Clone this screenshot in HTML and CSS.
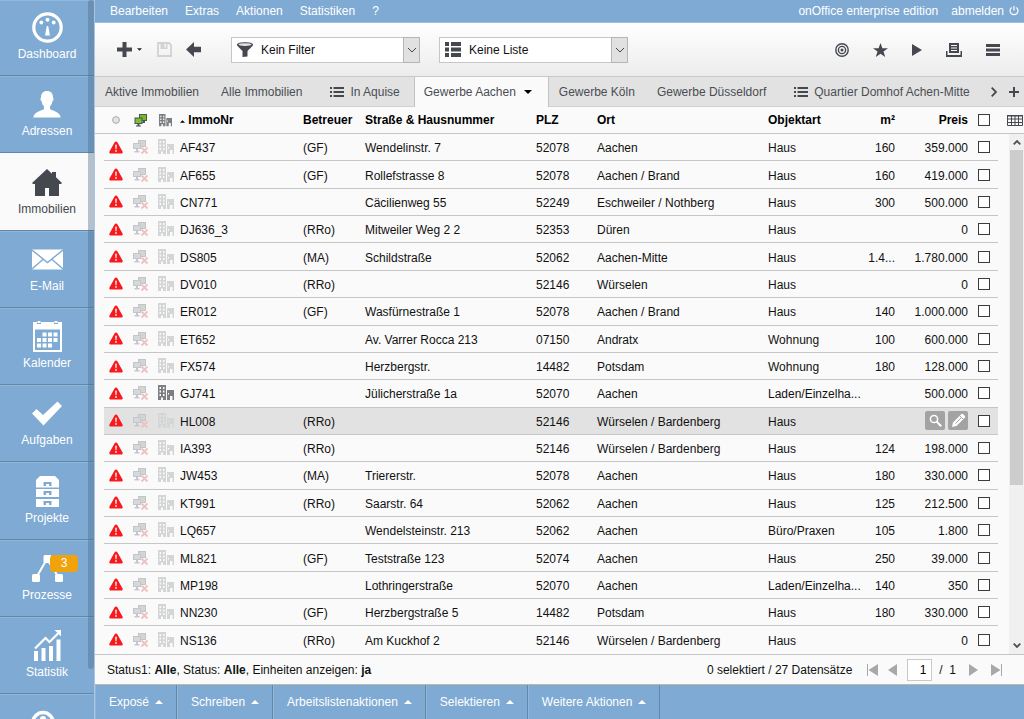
FILE: index.html
```html
<!DOCTYPE html>
<html lang="de">
<head>
<meta charset="utf-8">
<title>onOffice enterprise edition – Immobilien</title>
<meta name="viewport" content="width=device-width, initial-scale=1">
<link rel="stylesheet" href="styles.css">
</head>
<body>
<svg class="sprite" aria-hidden="true">
  <symbol id="warn" viewBox="0 0 14 13"><path d="M7 .4c.7 0 1.100.3 1.500 1l5 9c.6 1.200 0 2.200-1.200 2.200H1.700C.5 12.600-.1 11.600.5 10.400l5-9C5.900.7 6.300.4 7 .4z" fill="#f8191d"/><path d="M6.200 3.800h1.600l-.3 4.400h-1zM6.200 9.200h1.600v1.600H6.200z" fill="#fff"/></symbol>
  <symbol id="web" viewBox="0 0 17 16"><path d="M6 1h8v7H9v2H6z" fill="#c3c5c7"/><path d="M7 2h6v5H7z" fill="#d2d4d6"/><path d="M1 4h8v6H1zM4 10h2v2H4zM2.500 12h5v1.500h-5z" fill="#c3c7cb"/><path d="M2 5h6v4H2z" fill="#d6d9dc"/><path d="M9.500 8.500l6 6m0-6l-6 6" stroke="#efc0c0" stroke-width="1.800"/></symbol>
  <symbol id="webon" viewBox="0 0 14 14"><path d="M5 1h8v7H5zM9 8h2v2H8z" fill="#4a5a50"/><path d="M6 2h6v5H6z" fill="#76b82a"/><path d="M.5 4.500h8V11h-8zM3.500 11h2v1.500H7v1H2v-1h1.500z" fill="#46545c"/><path d="M1.500 5.500h6V10h-6z" fill="#80c02c"/></symbol>
  <symbol id="bld" viewBox="0 0 16 16"><path fill="currentColor" fill-rule="evenodd" d="M0 0h8v15H0zM1.500 2v2H3V2zM5 2v2h1.500V2zM1.500 5.500v2H3v-2zM5 5.500v2h1.500v-2zM1.500 9v2H3V9zM5 9v2h1.500V9zM3 12.500V15h2v-2.500zM9 5h7v10h-1.500v-4H12v4H9zM10 8v1.500h1V8z"/></symbol>
  <symbol id="list" viewBox="0 0 14 12"><path fill="#45484d" d="M0 1h2v2H0zM3.500 1H14v2H3.500zM0 5h2v2H0zM3.500 5H14v2H3.500zM0 9h2v2H0zM3.500 9H14v2H3.500z"/></symbol>
  <symbol id="up" viewBox="0 0 8 4"><path fill="currentColor" d="M0 4l4-4 4 4z"/></symbol>
  <symbol id="down" viewBox="0 0 8 4"><path fill="currentColor" d="M0 0h8L4 4z"/></symbol>
  <symbol id="chev" viewBox="0 0 10 6"><path fill="none" stroke="currentColor" d="M1 1l4 4 4-4"/></symbol>
</svg>
<div class="app">
  <nav class="side" aria-label="Module">
    <a href="#" class="mod"><svg width="31" height="31" viewBox="0 0 31 31"><circle cx="15.500" cy="15.500" r="13.700" fill="none" stroke="#fff" stroke-width="3.200"/><path fill="#fff" d="M14.800 14h1.400l1.800 9.500h-5z"/><g fill="#fff"><circle cx="9.300" cy="10.500" r="1.900"/><circle cx="15.500" cy="7.800" r="2"/><circle cx="21.700" cy="10.500" r="1.900"/></g></svg>Dashboard</a>
    <a href="#" class="mod"><svg width="28" height="27" viewBox="0 0 28 27"><path fill="#fff" d="M14 0c4 0 6 2.500 6 6.500 1 1 .6 3-.5 3.500-.4 2.500-1.200 4-2.500 5.500v2.500c2.500 1.800 10 3 10.800 8.500H.2C1 21 8.500 19.800 11 18v-2.500C9.700 14 8.900 12.500 8.500 10 7.400 9.500 7 7.500 8 6.500 8 2.500 10 0 14 0z"/></svg>Adressen</a>
    <a href="#" class="mod on" aria-current="page"><svg width="30" height="27" viewBox="0 0 30 27"><path fill="#45494f" d="M15 0l5 4.700V3h4v5.300L30 14l-1 1h-2v12H17v-8h-4v8H3V15H1l-1-1z"/></svg>Immobilien</a>
    <a href="#" class="mod"><svg width="31" height="20" viewBox="0 0 31 20"><path fill="#fff" d="M0 0h31v20H0z"/><path fill="none" stroke="#7faad3" stroke-width="1.400" d="M0 .5l15.500 12.500L31 .5M0 19.500l11.500-10M31 19.500l-11.500-10"/></svg>E-Mail</a>
    <a href="#" class="mod"><svg width="29" height="31" viewBox="0 0 29 31"><path fill="#fff" fill-rule="evenodd" d="M0 1h4v2h4V1h13v2h4V1h4v30H0zM2 8.500V29h25V8.500z"/><path fill="#fff" d="M4.500 0h3v2h-3zM21.500 0h3v2h-3zM9.500 11.500h4v4h-4zM15 11.500h4v4h-4zM20.500 11.500h4v4h-4zM4 17h4v4H4zM9.500 17h4v4h-4zM15 17h4v4h-4zM20.500 17h4v4h-4zM4 22.500h4v4H4zM9.500 22.500h4v4h-4zM15 22.500h4v4h-4z"/></svg>Kalender</a>
    <a href="#" class="mod"><svg width="30" height="24" viewBox="0 0 30 24"><path fill="#fff" d="M0 12l4.500-4.500 6.500 6L25.500 0 30 4.500 11.500 24z"/></svg>Aufgaben</a>
    <a href="#" class="mod"><svg width="23" height="31" viewBox="0 0 23 31"><path fill="#fff" fill-rule="evenodd" d="M4 0h15l4 4v7.500H0V4zM7.500 6v4H10V8h3v2h2.500V6zM0 13h23v8H0zM7.500 15v4H10v-2h3v2h2.500v-4zM0 23h23v8H0zM7.500 25v4H10v-2h3v2h2.500v-4z"/></svg>Projekte</a>
    <a href="#" class="mod"><svg width="31" height="27" viewBox="0 0 31 27"><path stroke="#fff" stroke-width="2" fill="none" d="M4 23L15 4l12 19"/><g fill="#fff"><rect x="11.500" width="8" height="8" rx="1.500"/><rect y="19" width="8" height="8" rx="1.500"/><rect x="23" y="19" width="8" height="8" rx="1.500"/></g></svg>Prozesse<span class="badge">3</span></a>
    <a href="#" class="mod"><svg width="28" height="31" viewBox="0 0 28 31"><path fill="#fff" d="M1 21h4v10H1zM8.500 18h4v13h-4zM16 16h4v15h-4zM23.500 9.500h4V31h-4z"/><path fill="none" stroke="#fff" stroke-width="2.200" d="M2 18.500L12.500 8l4 4L26 2.500"/><path fill="#fff" d="M21.500 0H28v6.500z"/></svg>Statistik</a>
    <a href="#" class="mod" aria-label="Hilfe"><svg width="24" height="24" viewBox="0 0 24 24"><circle cx="12" cy="12" r="10" fill="none" stroke="#fff" stroke-width="3.500"/><circle cx="12" cy="8.500" r="3" fill="#fff"/></svg></a>
    <div class="sidethumb"></div>
  </nav>

  <div class="main">
    <header class="menu">
      <a href="#">Bearbeiten</a><a href="#">Extras</a><a href="#">Aktionen</a><a href="#">Statistiken</a><a href="#">?</a>
      <span class="edition">onOffice enterprise edition</span>
      <a href="#" class="logout">abmelden <svg width="10" height="10" viewBox="0 0 10 10"><path fill="none" stroke="#fff" stroke-width="1.200" d="M2.700 1.400a4 4 0 1 0 4.600 0M5 0v4.500"/></svg></a>
    </header>

    <div class="tools">
      <button class="tool add" aria-label="Neu"><svg width="15" height="15" viewBox="0 0 15 15"><path fill="#45494f" d="M5.500 0h4v5.500H15v4H9.500V15h-4V9.500H0v-4h5.500z"/></svg><svg class="mini"><use href="#down"/></svg></button>
      <button class="tool save" aria-label="Speichern" disabled><svg width="15" height="15" viewBox="0 0 15 15"><path fill="none" stroke="#d2d2d2" stroke-width="1.800" d="M1 1h11l2 2v11H1z"/><path fill="#d2d2d2" fill-rule="evenodd" d="M3.500 1h7v6h-7zM7.500 2v3.500H9V2z"/></svg></button>
      <button class="tool back" aria-label="Zurück"><svg width="15" height="15" viewBox="0 0 15 15"><path fill="#45494f" d="M0 7.500L8 0v4.700h7v5.600H8V15z"/></svg></button>
      <div class="pick">
        <svg width="16" height="15" viewBox="0 0 16 15"><path fill="#45494f" d="M0 2.500C0-.6 16-.6 16 2.500c0 1.200-1 2-5.500 6.500v5.500l-5 .5V9C1 4.500 0 3.700 0 2.500z"/><ellipse cx="8" cy="2.600" rx="6.500" ry="1.400" fill="#e4e4e4"/></svg>
        <select aria-label="Filter"><option>Kein Filter</option></select>
        <span class="arrow"><svg width="10" height="6"><use href="#chev"/></svg></span>
      </div>
      <div class="pick">
        <svg width="16" height="15" viewBox="0 0 16 15"><path fill="#45494f" d="M0 0h4v4H0zM6 0h10v4H6zM0 5.500h4v4H0zM6 5.500h10v4H6zM0 11h4v4H0zM6 11h10v4H6z"/></svg>
        <select aria-label="Liste"><option>Keine Liste</option></select>
        <span class="arrow"><svg width="10" height="6"><use href="#chev"/></svg></span>
      </div>
      <div class="right">
        <button class="tool" aria-label="Ziel"><svg width="14" height="14" viewBox="0 0 14 14"><g fill="none" stroke="#45494f" stroke-width="1.400"><circle cx="7" cy="7" r="6.200"/><circle cx="7" cy="7" r="3.600"/></g><circle cx="7" cy="7" r="1.500" fill="#45494f"/></svg></button>
        <button class="tool" aria-label="Favoriten"><svg width="15" height="14" viewBox="0 0 15 14"><path fill="#45494f" d="M7.500 0l1.900 5.200H15l-4.500 3.400 1.700 5.400-4.700-3.300L2.800 14l1.700-5.400L0 5.200h5.600z"/></svg></button>
        <button class="tool" aria-label="Start"><svg width="10" height="12" viewBox="0 0 10 12"><path fill="#45494f" d="M0 0l10 6-10 6z"/></svg></button>
        <button class="tool" aria-label="Drucken"><svg width="16" height="14" viewBox="0 0 16 14"><path fill="#45494f" fill-rule="evenodd" d="M3 0h10v10H3zM5 2v1h6V2zM5 4.500v1h6v-1zM5 7v1h6V7zM0 8h1.500v4h13V8H16v6H0z"/></svg></button>
        <button class="tool" aria-label="Menü"><svg width="14" height="12" viewBox="0 0 14 12"><path fill="#45494f" d="M0 0h14v3H0zM0 4.500h14v3H0zM0 9h14v3H0z"/></svg></button>
      </div>
    </div>

    <div class="tabs">
      <button class="tab">Aktive Immobilien</button>
      <button class="tab">Alle Immobilien</button>
      <button class="tab listed"><svg width="14" height="12"><use href="#list"/></svg>In Aquise</button>
      <button class="tab active">Gewerbe Aachen<svg class="caret" width="8" height="4"><use href="#down"/></svg></button>
      <button class="tab">Gewerbe Köln</button>
      <button class="tab">Gewerbe Düsseldorf</button>
      <button class="tab listed"><svg width="14" height="12"><use href="#list"/></svg>Quartier Domhof Achen-Mitte</button>
      <span class="ends">
        <button class="tool" aria-label="Weiter"><svg width="6" height="10" viewBox="0 0 6 10"><path fill="none" stroke="#45494f" stroke-width="1.800" d="M.7.7L5 5 .7 9.300"/></svg></button>
        <button class="tool" aria-label="Tab hinzufügen"><svg width="10" height="10" viewBox="0 0 10 10"><path stroke="#45494f" stroke-width="2" d="M5 0v10M0 5h10"/></svg></button>
      </span>
    </div>

    <div class="listing">
      <table>
        <colgroup><col class="w-edge"><col class="w-mark"><col class="w-icon"><col class="w-icon"><col class="w-nr"><col class="w-user"><col class="w-street"><col class="w-zip"><col><col class="w-type"><col class="w-size"><col class="w-price"><col class="w-check"><col class="w-grid"></colgroup>
        <thead><tr><th></th><th class="i"><svg width="8" height="8" viewBox="0 0 8 8"><circle cx="4" cy="4" r="3.400" fill="#e4e4e4" stroke="#a8a8a8"/></svg></th><th class="i"><svg width="14" height="14"><use href="#webon"/></svg></th><th class="i dark"><svg width="13" height="13"><use href="#bld"/></svg></th><th class="sort"><svg width="5" height="3"><use href="#up"/></svg> ImmoNr</th><th>Betreuer</th><th>Straße &amp; Hausnummer</th><th>PLZ</th><th>Ort</th><th>Objektart</th><th class="n">m²</th><th class="n">Preis</th><th class="c"><input type="checkbox" aria-label="Alle auswählen"></th><th class="g"><svg width="16" height="11" viewBox="0 0 16 11"><path fill="none" stroke="#45494f" d="M.5.5h15v10H.5zM0 4h16M0 7.500h16M4.500 1v10M8 1v10M11.500 1v10"/><path fill="#45494f" d="M0 0h16v1.500H0z"/></svg></th></tr></thead>
        <tbody>
        <tr><td></td><td class="i"><svg class="w"><use href="#warn"/></svg></td><td class="i"><svg class="m"><use href="#web"/></svg></td><td class="i"><svg class="b"><use href="#bld"/></svg></td><td>AF437</td><td>(GF)</td><td>Wendelinstr. 7</td><td>52078</td><td>Aachen</td><td>Haus</td><td class="n">160</td><td class="n">359.000</td><td class="c"><input type="checkbox" aria-label="AF437"></td><td></td></tr>
        <tr><td></td><td class="i"><svg class="w"><use href="#warn"/></svg></td><td class="i"><svg class="m"><use href="#web"/></svg></td><td class="i"><svg class="b"><use href="#bld"/></svg></td><td>AF655</td><td>(GF)</td><td>Rollefstrasse 8</td><td>52078</td><td>Aachen / Brand</td><td>Haus</td><td class="n">160</td><td class="n">419.000</td><td class="c"><input type="checkbox" aria-label="AF655"></td><td></td></tr>
        <tr><td></td><td class="i"><svg class="w"><use href="#warn"/></svg></td><td class="i"><svg class="m"><use href="#web"/></svg></td><td class="i"><svg class="b"><use href="#bld"/></svg></td><td>CN771</td><td></td><td>Cäcilienweg 55</td><td>52249</td><td>Eschweiler / Nothberg</td><td>Haus</td><td class="n">300</td><td class="n">500.000</td><td class="c"><input type="checkbox" aria-label="CN771"></td><td></td></tr>
        <tr><td></td><td class="i"><svg class="w"><use href="#warn"/></svg></td><td class="i"><svg class="m"><use href="#web"/></svg></td><td class="i"><svg class="b"><use href="#bld"/></svg></td><td>DJ636_3</td><td>(RRo)</td><td>Mitweiler Weg 2 2</td><td>52353</td><td>Düren</td><td>Haus</td><td class="n"></td><td class="n">0</td><td class="c"><input type="checkbox" aria-label="DJ636_3"></td><td></td></tr>
        <tr><td></td><td class="i"><svg class="w"><use href="#warn"/></svg></td><td class="i"><svg class="m"><use href="#web"/></svg></td><td class="i"><svg class="b"><use href="#bld"/></svg></td><td>DS805</td><td>(MA)</td><td>Schildstraße</td><td>52062</td><td>Aachen-Mitte</td><td>Haus</td><td class="n">1.4...</td><td class="n">1.780.000</td><td class="c"><input type="checkbox" aria-label="DS805"></td><td></td></tr>
        <tr><td></td><td class="i"><svg class="w"><use href="#warn"/></svg></td><td class="i"><svg class="m"><use href="#web"/></svg></td><td class="i"><svg class="b"><use href="#bld"/></svg></td><td>DV010</td><td>(RRo)</td><td></td><td>52146</td><td>Würselen</td><td>Haus</td><td class="n"></td><td class="n">0</td><td class="c"><input type="checkbox" aria-label="DV010"></td><td></td></tr>
        <tr><td></td><td class="i"><svg class="w"><use href="#warn"/></svg></td><td class="i"><svg class="m"><use href="#web"/></svg></td><td class="i"><svg class="b"><use href="#bld"/></svg></td><td>ER012</td><td>(GF)</td><td>Wasfürnestraße 1</td><td>52078</td><td>Aachen / Brand</td><td>Haus</td><td class="n">140</td><td class="n">1.000.000</td><td class="c"><input type="checkbox" aria-label="ER012"></td><td></td></tr>
        <tr><td></td><td class="i"><svg class="w"><use href="#warn"/></svg></td><td class="i"><svg class="m"><use href="#web"/></svg></td><td class="i"><svg class="b"><use href="#bld"/></svg></td><td>ET652</td><td></td><td>Av. Varrer Rocca 213</td><td>07150</td><td>Andratx</td><td>Wohnung</td><td class="n">100</td><td class="n">600.000</td><td class="c"><input type="checkbox" aria-label="ET652"></td><td></td></tr>
        <tr><td></td><td class="i"><svg class="w"><use href="#warn"/></svg></td><td class="i"><svg class="m"><use href="#web"/></svg></td><td class="i"><svg class="b"><use href="#bld"/></svg></td><td>FX574</td><td></td><td>Herzbergstr.</td><td>14482</td><td>Potsdam</td><td>Wohnung</td><td class="n">180</td><td class="n">128.000</td><td class="c"><input type="checkbox" aria-label="FX574"></td><td></td></tr>
        <tr><td></td><td class="i"><svg class="w"><use href="#warn"/></svg></td><td class="i"><svg class="m"><use href="#web"/></svg></td><td class="i dark"><svg class="b"><use href="#bld"/></svg></td><td>GJ741</td><td></td><td>Jülicherstraße 1a</td><td>52070</td><td>Aachen</td><td>Laden/Einzelha...</td><td class="n"></td><td class="n">500.000</td><td class="c"><input type="checkbox" aria-label="GJ741"></td><td></td></tr>
        <tr class="hover"><td></td><td class="i"><svg class="w"><use href="#warn"/></svg></td><td class="i"><svg class="m"><use href="#web"/></svg></td><td class="i"><svg class="b"><use href="#bld"/></svg></td><td>HL008</td><td>(RRo)</td><td></td><td>52146</td><td>Würselen / Bardenberg</td><td>Haus</td><td class="n"></td><td class="acts"><div><button aria-label="Ansehen"><svg width="13" height="13" viewBox="0 0 13 13"><circle cx="5" cy="5" r="3.600" fill="none" stroke="#fff" stroke-width="1.500"/><path stroke="#fff" stroke-width="2" d="M7.800 7.800l4.400 4.400"/></svg></button><button aria-label="Bearbeiten"><svg width="15" height="15" viewBox="0 0 15 15"><path fill="#fff" d="M1 14l1-4.500L10.500 1c1-1 4.500 2.500 3.500 3.500L5.500 13z"/><path stroke="#a3a3a3" d="M9 3l3 3M4.500 10.500l6-6"/></svg></button></div></td><td class="c"><input type="checkbox" aria-label="HL008"></td><td></td></tr>
        <tr><td></td><td class="i"><svg class="w"><use href="#warn"/></svg></td><td class="i"><svg class="m"><use href="#web"/></svg></td><td class="i"><svg class="b"><use href="#bld"/></svg></td><td>IA393</td><td>(RRo)</td><td></td><td>52146</td><td>Würselen / Bardenberg</td><td>Haus</td><td class="n">124</td><td class="n">198.000</td><td class="c"><input type="checkbox" aria-label="IA393"></td><td></td></tr>
        <tr><td></td><td class="i"><svg class="w"><use href="#warn"/></svg></td><td class="i"><svg class="m"><use href="#web"/></svg></td><td class="i"><svg class="b"><use href="#bld"/></svg></td><td>JW453</td><td>(MA)</td><td>Triererstr.</td><td>52078</td><td>Aachen</td><td>Haus</td><td class="n">180</td><td class="n">330.000</td><td class="c"><input type="checkbox" aria-label="JW453"></td><td></td></tr>
        <tr><td></td><td class="i"><svg class="w"><use href="#warn"/></svg></td><td class="i"><svg class="m"><use href="#web"/></svg></td><td class="i"><svg class="b"><use href="#bld"/></svg></td><td>KT991</td><td>(RRo)</td><td>Saarstr. 64</td><td>52062</td><td>Aachen</td><td>Haus</td><td class="n">125</td><td class="n">212.500</td><td class="c"><input type="checkbox" aria-label="KT991"></td><td></td></tr>
        <tr><td></td><td class="i"><svg class="w"><use href="#warn"/></svg></td><td class="i"><svg class="m"><use href="#web"/></svg></td><td class="i"><svg class="b"><use href="#bld"/></svg></td><td>LQ657</td><td></td><td>Wendelsteinstr. 213</td><td>52062</td><td>Aachen</td><td>Büro/Praxen</td><td class="n">105</td><td class="n">1.800</td><td class="c"><input type="checkbox" aria-label="LQ657"></td><td></td></tr>
        <tr><td></td><td class="i"><svg class="w"><use href="#warn"/></svg></td><td class="i"><svg class="m"><use href="#web"/></svg></td><td class="i"><svg class="b"><use href="#bld"/></svg></td><td>ML821</td><td>(GF)</td><td>Teststraße 123</td><td>52074</td><td>Aachen</td><td>Haus</td><td class="n">250</td><td class="n">39.000</td><td class="c"><input type="checkbox" aria-label="ML821"></td><td></td></tr>
        <tr><td></td><td class="i"><svg class="w"><use href="#warn"/></svg></td><td class="i"><svg class="m"><use href="#web"/></svg></td><td class="i"><svg class="b"><use href="#bld"/></svg></td><td>MP198</td><td></td><td>Lothringerstraße</td><td>52070</td><td>Aachen</td><td>Laden/Einzelha...</td><td class="n">140</td><td class="n">350</td><td class="c"><input type="checkbox" aria-label="MP198"></td><td></td></tr>
        <tr><td></td><td class="i"><svg class="w"><use href="#warn"/></svg></td><td class="i"><svg class="m"><use href="#web"/></svg></td><td class="i"><svg class="b"><use href="#bld"/></svg></td><td>NN230</td><td>(GF)</td><td>Herzbergstraße 5</td><td>14482</td><td>Potsdam</td><td>Haus</td><td class="n">180</td><td class="n">330.000</td><td class="c"><input type="checkbox" aria-label="NN230"></td><td></td></tr>
        <tr><td></td><td class="i"><svg class="w"><use href="#warn"/></svg></td><td class="i"><svg class="m"><use href="#web"/></svg></td><td class="i"><svg class="b"><use href="#bld"/></svg></td><td>NS136</td><td>(RRo)</td><td>Am Kuckhof 2</td><td>52146</td><td>Würselen / Bardenberg</td><td>Haus</td><td class="n"></td><td class="n">0</td><td class="c"><input type="checkbox" aria-label="NS136"></td><td></td></tr>
        </tbody>
      </table>
      <div class="scroll"><svg class="flip" width="8" height="5" viewBox="0 0 8 5"><path fill="none" stroke="#505050" stroke-width="1.800" d="M.7.7L4 4 7.300.7"/></svg><span class="thumb"></span><svg width="8" height="5" viewBox="0 0 8 5"><path fill="none" stroke="#505050" stroke-width="1.800" d="M.7.7L4 4 7.300.7"/></svg></div>
    </div>

    <div class="status">
      <span>Status1: <b>Alle</b>, Status: <b>Alle</b>, Einheiten anzeigen: <b>ja</b></span>
      <span class="count">0 selektiert / 27 Datensätze</span>
      <div class="pager">
        <button class="tool" aria-label="Erste Seite"><svg width="11" height="12" viewBox="0 0 11 12"><path fill="#a6a9ac" d="M0 0h1v12H0zM11 0v12L1.500 6z"/></svg></button>
        <button class="tool prev" aria-label="Vorige Seite"><svg width="9" height="12" viewBox="0 0 9 12"><path fill="#a6a9ac" d="M9 0v12L0 6z"/></svg></button>
        <input type="text" value="1" aria-label="Seite"><span class="of">/&nbsp; 1</span>
        <button class="tool next" aria-label="Nächste Seite"><svg width="9" height="12" viewBox="0 0 9 12"><path fill="#a6a9ac" d="M0 0v12l9-6z"/></svg></button>
        <button class="tool" aria-label="Letzte Seite"><svg width="11" height="12" viewBox="0 0 11 12"><path fill="#a6a9ac" d="M10 0h1v12h-1zM0 0v12l9.500-6z"/></svg></button>
      </div>
    </div>

    <footer class="actions">
      <button>Exposé<svg width="8" height="4"><use href="#up"/></svg></button><button>Schreiben<svg width="8" height="4"><use href="#up"/></svg></button><button>Arbeitslistenaktionen<svg width="8" height="4"><use href="#up"/></svg></button><button>Selektieren<svg width="8" height="4"><use href="#up"/></svg></button><button>Weitere Aktionen<svg width="8" height="4"><use href="#up"/></svg></button>
    </footer>
  </div>
</div>
</body>
</html>
```
FILE: styles.css
```css
* { box-sizing: border-box; }
body, button, input, select { font-family: "Liberation Sans", Arial, sans-serif; font-size: 12px; }
body { margin: 0; color: #111; background: #fafafa; }
a { color: inherit; text-decoration: none; }
button { border: 0; padding: 0; background: none; color: inherit; }
svg { display: block; flex: none; }
.sprite { position: absolute; width: 0; height: 0; }

.app { display: grid; grid-template-columns: 95px 1fr; height: 100vh; overflow: hidden; }

/* Module navigation */
.side { position: relative; display: grid; grid-template-rows: 76px repeat(8, 1fr) 25px; min-height: 0; overflow: hidden; background: #7faad3; border-right: 1px solid #a9c5df; }
.mod { position: relative; display: flex; flex-direction: column; align-items: center; justify-content: flex-end; gap: 4px; min-height: 0; padding-bottom: 14px; overflow: hidden; border-bottom: 1px solid #6288a9; box-shadow: inset 0 1px #90b6da; color: #fff; line-height: 14px; }
.mod svg { height: 31px; }
.mod.on { background: #fafafa; color: #45494f; box-shadow: none; }
.mod:last-of-type { justify-content: flex-start; padding: 13px 8px 0 0; border: 0; }
.badge { position: absolute; left: 50px; top: 15px; width: 28px; height: 17px; border-radius: 4px; background: #f0a30a; line-height: 17px; text-align: center; }
.sidethumb { position: absolute; right: 0; top: 0; width: 6px; height: 93%; border-radius: 3px; background: rgba(75, 105, 135, .4); }

.main { display: flex; flex-direction: column; min-width: 0; min-height: 0; }

.menu { display: flex; align-items: center; gap: 17px; height: 23px; padding: 0 5px 0 15px; background: #7faad3; border-bottom: 1px solid #9cbedd; color: #fff; }
.edition { margin-left: auto; }
.logout { display: flex; align-items: center; gap: 5px; margin-left: -4px; }

.tools { display: flex; align-items: center; height: 53px; padding: 0 24px 0 22px; background: linear-gradient(#fff, #ececec); }
.tool { display: flex; align-items: center; }
.add { gap: 5px; margin-right: 15px; }
.mini { width: 5px; height: 3px; color: #222; }
.save { margin-right: 14px; }
.back { margin-right: 30px; }
.pick { position: relative; display: flex; align-items: center; width: 189px; height: 26px; margin-right: 19px; border: 1px solid #c6c6c6; background: #fff; }
.pick > svg { margin-left: 5px; }
.pick select { appearance: none; flex: 1; height: 24px; padding: 0 20px 0 8px; border: 0; background: none; color: #111; }
.arrow { position: absolute; right: -1px; top: -1px; display: grid; place-items: center; width: 17px; height: 26px; border: 1px solid #b5b5b5; background: #e1e1e1; color: #444; pointer-events: none; }
.right { display: flex; align-items: center; gap: 24px; margin-left: auto; }

.tabs { display: flex; height: 31px; border-top: 1px solid #c9c9c9; background: #e2e2e2; box-shadow: inset 0 -1px #d2d2d2; color: #4a4d52; }
.tab { display: flex; align-items: center; gap: 6px; padding: 0 12px 0 10px; white-space: nowrap; }
.tab.listed { padding: 0 14px 0 16px; }
.tab.active { padding: 0 16px 0 9px; gap: 8px; border: 1px solid #c2c2c2; border-width: 0 1px; background: #fafafa; }
.caret { color: #000; }
.ends { display: flex; gap: 12px; margin-left: auto; padding-right: 5px; }

.listing { position: relative; flex: 1; min-height: 0; }
table { width: 100%; height: 100%; table-layout: fixed; border-collapse: separate; border-spacing: 0; }
.w-edge { width: 9px; }
.w-mark { width: 24px; }
.w-icon { width: 25px; }
.w-nr { width: 123px; }
.w-user { width: 62px; }
.w-street { width: 171px; }
.w-zip { width: 61px; }
.w-type { width: 97px; }
.w-size { width: 34px; }
.w-price { width: 73px; }
.w-check { width: 28px; }
.w-grid { width: 26px; }
th, td { padding: 0 2px; border-bottom: 1px solid #c6c6c6; text-align: left; white-space: nowrap; vertical-align: middle; line-height: 14px; }
th { height: 27px; color: #000; }
td { height: 24px; padding-top: 2px; }
td:first-child, td:last-child, tbody tr:last-child td { border-bottom-color: transparent; }
.i { padding: 0; color: #d4d6d6; }
.i svg { margin: 0 auto; }
.dark { color: #7d8083; }
.w { width: 14px; height: 13px; }
.m { width: 17px; height: 16px; }
.b { width: 16px; height: 16px; }
.sort svg { display: inline-block; vertical-align: 1px; }
.n { text-align: right; }
.c { padding: 0 8px; }
.g svg { margin-left: 7px; }
input[type="checkbox"] { appearance: none; display: block; width: 12px; height: 12px; margin: 0; border: 1px solid #3c3c3c; background: #fff; }
.hover td:not(:first-child):not(:last-child) { background: #e2e2e2; }
.acts { padding-top: 0; }
.acts div { display: flex; justify-content: flex-end; gap: 3px; }
.acts button { display: grid; place-items: center; width: 20px; height: 19px; border-radius: 2px; background: #a3a3a3; }

.scroll { position: absolute; right: 0; top: 27px; bottom: 0; display: flex; flex-direction: column; align-items: center; width: 15px; padding: 6px 0; background: #f0f0f0; }
.flip { transform: rotate(180deg); }
.thumb { width: 13px; height: 66%; margin: 5px 0 auto; background: #cdcdcd; }

.status { display: flex; align-items: center; height: 31px; padding: 0 22px 0 12px; border-top: 1px solid #c6c6c6; border-bottom: 1px solid #b9b9a9; }
.count { margin-left: auto; }
.pager { display: flex; align-items: center; margin-left: 15px; }
.prev { margin: 0 10px; }
.next { margin: 0 13px; }
.pager input { width: 25px; height: 22px; padding: 0 5px; border: 1px solid #c9c9c9; background: #fff; text-align: right; }
.of { margin-left: 7px; }

.actions { display: flex; height: 34px; background: #7faad3; color: #fff; }
.actions button { display: flex; align-items: center; gap: 6px; padding: 0 13px 0 14px; border-right: 1px solid #6288a9; box-shadow: inset 1px 0 #90b6da; white-space: nowrap; }
```
